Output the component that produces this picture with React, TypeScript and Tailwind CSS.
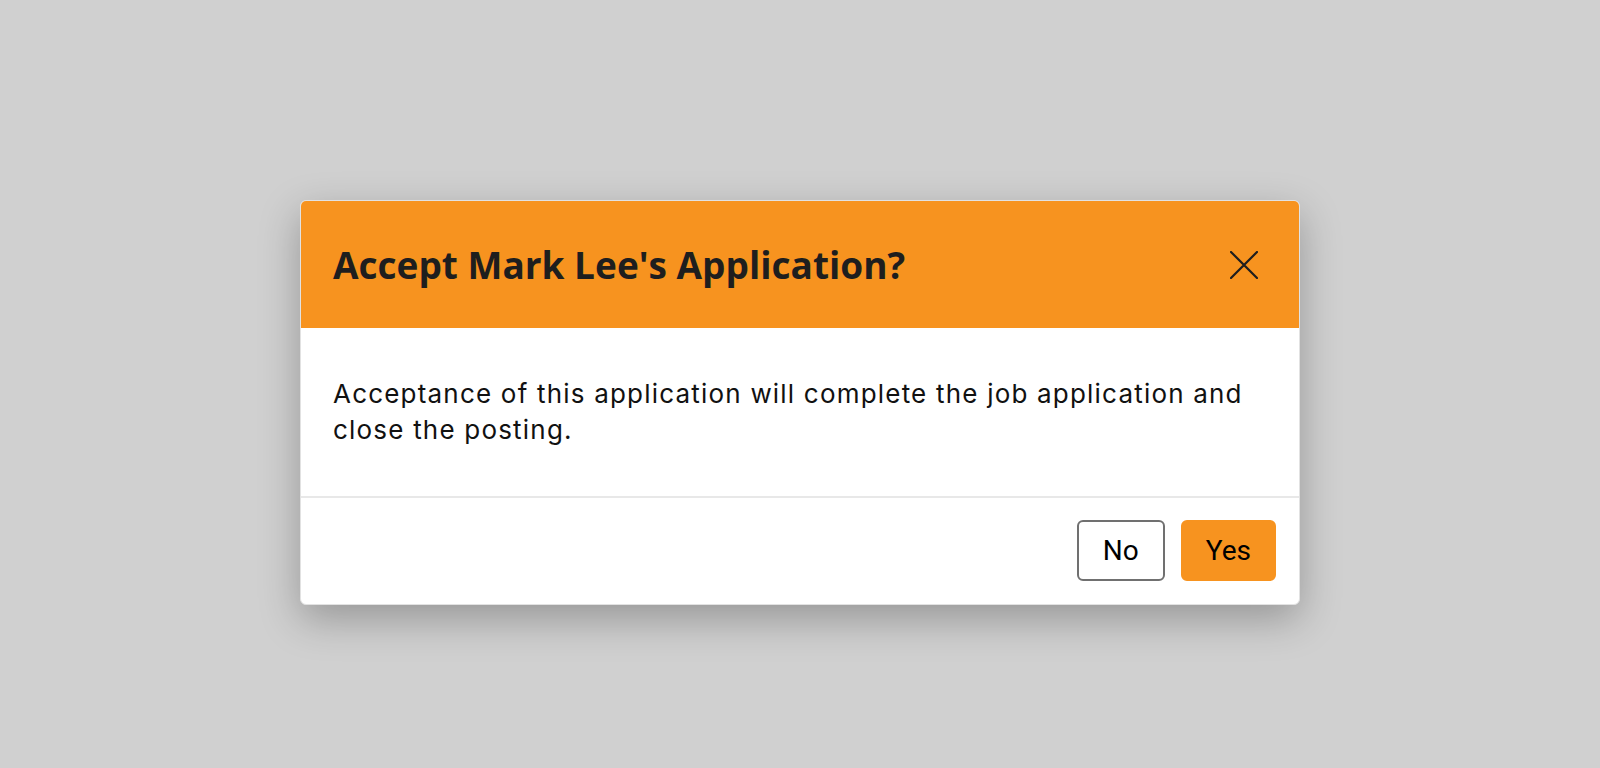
import React from "react";

const CloseIcon = () => (
  <svg width="28" height="28" viewBox="0 0 28 28" fill="none">
    <path
      d="M1 1 L27 27 M27 1 L1 27"
      stroke="#1e1e1e"
      strokeWidth="2.2"
      strokeLinecap="round"
    />
  </svg>
);

const AcceptModal = () => {
  return (
    <div className="w-[1000px] mx-auto rounded-md border border-[#e2e2e2] bg-white shadow-[0_14px_40px_rgba(0,0,0,0.28)] overflow-hidden">
      <div className="h-[127px] bg-[#f7931f] flex items-center justify-between pl-8 pr-[41px]">
        <h2 className="text-[37px] font-bold text-[#1e1e1e] font-['Open_Sans',sans-serif]">
          Accept Mark Lee's Application?
        </h2>
        <button className="flex items-center justify-center">
          <CloseIcon />
        </button>
      </div>

      <div className="px-8 pt-12 pb-12">
        <p className="text-[26px] leading-[36px] tracking-[1.2px] text-[#111] font-['Inter',sans-serif]">
          Acceptance of this application will complete the job application and
          close the posting.
        </p>
      </div>

      <div className="border-t-2 border-[#e8e8e8] flex justify-end gap-4 pt-[22px] pb-[23px] pr-[23px]">
        <button className="h-[61px] px-6 rounded-md border-2 border-[#707070] bg-white text-[28px] text-black font-['Roboto',sans-serif]">
          No
        </button>
        <button className="h-[61px] px-[23px] rounded-md border-2 border-[#f7931f] bg-[#f7931f] text-[28px] text-black font-['Roboto',sans-serif]">
          Yes
        </button>
      </div>
    </div>
  );
};

export default function App() {
  return (
    <div className="min-h-[768px] w-full bg-[#d0d0d0] pt-[200px]">
      <AcceptModal />
    </div>
  );
}
